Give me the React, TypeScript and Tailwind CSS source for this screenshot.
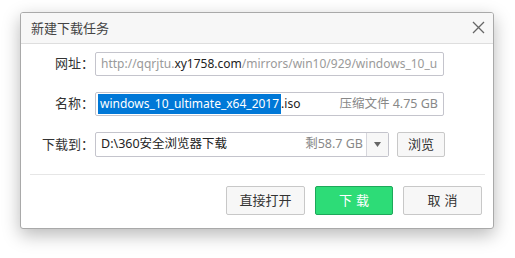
import React from "react";

const font = { fontFamily: '"Noto Sans", "Noto Sans CJK SC", sans-serif' };

export default function App() {
  return (
    <div className="w-[515px] h-[258px] bg-white pl-[20px] pt-[12px]" style={font}>
      <div className="w-[474px] h-[217px] bg-white border border-[#a9a9a9] rounded-[3px] shadow-[0_6px_18px_rgba(0,0,0,0.28)] flex flex-col overflow-hidden">
        <div className="h-[31px] flex items-center justify-between bg-[#f7f7f7] border-b border-[#dedede] pl-[10px] pr-[8px] shrink-0">
          <span className="text-[13px] text-[#444] leading-none">新建下载任务</span>
          <svg width="13" height="13" viewBox="0 0 13 13" className="mt-[-1px]">
            <path d="M1 1 L12 12 M12 1 L1 12" stroke="#666" strokeWidth="1.3" fill="none" />
          </svg>
        </div>
        <div className="flex flex-col pt-[8px]">
          <div className="flex items-center h-[24px]">
            <div className="w-[73px] text-right text-[13px] text-[#333]">网址：</div>
            <div className="ml-[1px] w-[349px] h-[24px] border border-[#c4c4cc] rounded-[2px] flex items-center pl-[5px] overflow-hidden whitespace-nowrap text-[12px]">
              <span className="text-[#9a9a9a]">http://qqrjtu.</span>
              <span className="text-[#222]">xy1758.com</span>
              <span className="text-[#9a9a9a]">/mirrors/win10/929/windows_10_u</span>
            </div>
          </div>
          <div className="flex items-center h-[24px] mt-[16px]">
            <div className="w-[73px] text-right text-[13px] text-[#333]">名称：</div>
            <div className="ml-[1px] w-[349px] h-[24px] border border-[#c4c4cc] rounded-[2px] flex items-center pl-[2px] pr-[5px] whitespace-nowrap text-[12.5px]">
              <span className="bg-[#0078d7] text-white text-[12px] px-[2px] leading-[20px]">windows_10_ultimate_x64_2017</span>
              <span className="text-[#222] text-[12px] leading-[20px]">.iso</span>
              <span className="ml-auto text-[#888]">压缩文件 4.75 GB</span>
            </div>
          </div>
          <div className="flex items-center h-[25px] mt-[16px]">
            <div className="w-[73px] text-right text-[13px] text-[#333]">下载到：</div>
            <div className="ml-[1px] w-[294px] h-[25px] border border-[#c4c4cc] rounded-[2px] flex items-stretch whitespace-nowrap text-[12.5px]">
              <span className="flex items-center pl-[5px] text-[#222]">D:\360安全浏览器下载</span>
              <span className="ml-auto flex items-center pr-[3px] text-[#888]">剩58.7 GB</span>
              <span className="w-[22px] border-l border-[#d6d6dc] bg-[#f7f7f7] flex items-center justify-center">
                <svg width="7" height="5" viewBox="0 0 7 5"><path d="M0 0 L7 0 L3.5 5 Z" fill="#666" /></svg>
              </span>
            </div>
            <button className="ml-[8px] w-[48px] h-[25px] border border-[#c8c8c8] rounded-[2px] bg-[#f7f7f7] text-[13px] text-[#333] flex items-center justify-center">浏览</button>
          </div>
          <div className="mt-[17px] ml-[9px] mr-[8px] border-t border-[#e6e6e6]" />
          <div className="flex justify-end gap-[10px] pr-[11px] mt-[11px]">
            <button className="w-[79px] h-[29px] border border-[#c8c8c8] rounded-[2px] bg-[#f7f7f7] text-[13px] text-[#333]">直接打开</button>
            <button className="w-[78px] h-[29px] border border-[#1ea85a] rounded-[2px] bg-[#2ddc77] text-[13px] text-white tracking-[4px] pl-[4px]">下载</button>
            <button className="w-[79px] h-[29px] border border-[#c8c8c8] rounded-[2px] bg-[#f7f7f7] text-[13px] text-[#333] tracking-[4px] pl-[4px]">取消</button>
          </div>
        </div>
      </div>
    </div>
  );
}
